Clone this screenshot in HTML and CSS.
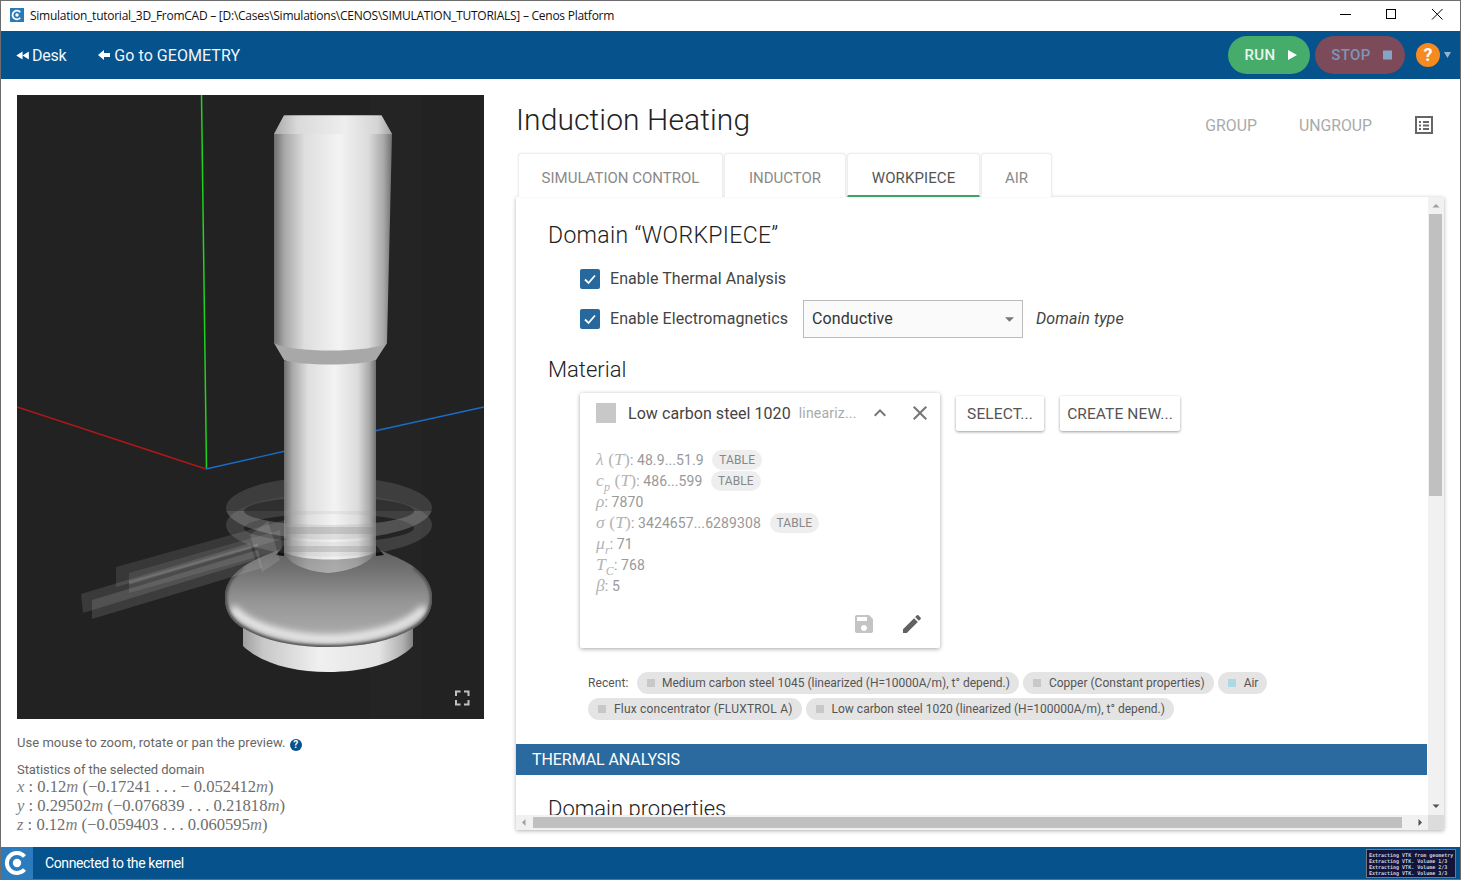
FILE: index.html
```html
<!DOCTYPE html>
<html lang="en">
<head>
<meta charset="utf-8">
<title>Cenos Platform</title>
<link rel="stylesheet" href="styles.css">
</head>
<body>
<div class="app">
  <header class="titlebar">
    <svg class="title-logo" viewBox="0 0 14 14"><rect width="14" height="14" fill="#2a7ab8"/><path d="M10.300 4.200A4.400 4.400 0 1 0 10.300 9.800" fill="none" stroke="#fff" stroke-width="1.800"/><circle cx="7" cy="7" r="1.700" fill="#fff"/></svg>
    <span class="title-text">Simulation_tutorial_3D_FromCAD – [D:\Cases\Simulations\CENOS\SIMULATION_TUTORIALS] – Cenos Platform</span>
    <div class="winctl">
      <svg viewBox="0 0 46 30"><path d="M18 14.500h11" stroke="#000" fill="none"/></svg>
      <svg viewBox="0 0 46 30"><rect x="18.500" y="9.500" width="9" height="9" stroke="#000" stroke-width="1" fill="none"/></svg>
      <svg viewBox="0 0 46 30"><path d="M18 9l10.500 10.500M28.500 9L18 19.500" stroke="#000" fill="none"/></svg>
    </div>
  </header>

  <nav class="navbar">
    <a class="navlink navlink-desk"><svg class="nav-ico" viewBox="0 0 15 10"><path d="M0 5l7-4.500v9zM7 5l7-4.500v9z" fill="#fff"/></svg>Desk</a>
    <a class="navlink navlink-geo"><svg class="nav-ico-s" viewBox="0 0 12 10"><path d="M0 5l6-5v3h6v4H6v3z" fill="#fff"/></svg>Go to GEOMETRY</a>
    <div class="nav-right">
      <button class="pill pill-run">RUN<svg class="pill-ico" viewBox="0 0 9 10"><path d="M0 0l9 5-9 5z" fill="#fff"/></svg></button>
      <button class="pill pill-stop">STOP<svg class="pill-ico" viewBox="0 0 9 10"><rect y=".5" width="9" height="9" fill="#86a5c6"/></svg></button>
      <span class="help">?</span>
      <svg class="help-caret" viewBox="0 0 7 6"><path d="M0 0h7L3.500 6z" fill="#8fb2d6"/></svg>
    </div>
  </nav>

  <main class="main">
    <section class="left">
      <div class="viewer">
        <svg class="scene" viewBox="17 95 467 624">
          <defs>
            <linearGradient id="cyl" x1="0" x2="1" y1="0" y2="0">
              <stop offset="0" stop-color="#6e6e6e"/><stop offset=".09" stop-color="#a8a8a8"/><stop offset=".26" stop-color="#dedede"/><stop offset=".55" stop-color="#f3f3f3"/><stop offset=".8" stop-color="#dcdcdc"/><stop offset=".93" stop-color="#a8a8a8"/><stop offset="1" stop-color="#707070"/>
            </linearGradient>
            <linearGradient id="cham" x1="0" x2="1" y1="0" y2="0">
              <stop offset="0" stop-color="#a8a8a8"/><stop offset=".2" stop-color="#dadada"/><stop offset=".6" stop-color="#eeeeee"/><stop offset=".88" stop-color="#d4d4d4"/><stop offset="1" stop-color="#a0a0a0"/>
            </linearGradient>
            <linearGradient id="domeV" gradientUnits="userSpaceOnUse" x1="0" x2="0" y1="548" y2="647">
              <stop offset="0" stop-color="#5e5e5e"/><stop offset=".25" stop-color="#747474"/><stop offset=".55" stop-color="#969696"/><stop offset=".8" stop-color="#a6a6a6"/><stop offset="1" stop-color="#b0b0b0"/>
            </linearGradient>
            <linearGradient id="foot" x1="0" x2="1" y1="0" y2="0">
              <stop offset="0" stop-color="#a0a0a0"/><stop offset=".12" stop-color="#c8c8c8"/><stop offset=".45" stop-color="#f0f0f0"/><stop offset=".8" stop-color="#e4e4e4"/><stop offset=".94" stop-color="#b0b0b0"/><stop offset="1" stop-color="#808080"/>
            </linearGradient>
            <clipPath id="frontClip"><rect x="200" y="511" width="260" height="80"/></clipPath>
            <clipPath id="domeClip"><path d="M284 548C275 552 255 558 243 567C230 576 225 586 225 598C225 610 230 620 243 628C265 641 295 647 328 647C362 647 392 641 414 628C427 620 432 610 432 598C432 586 426 576 414 567C402 558 382 552 376 548Z"/></clipPath>
            <filter id="blur5" x="-20%" y="-40%" width="140%" height="180%"><feGaussianBlur stdDeviation="3.500"/></filter>
            <filter id="blur2" x="-10%" y="-10%" width="120%" height="120%"><feGaussianBlur stdDeviation="1.800"/></filter>
          </defs>
          <rect x="17" y="95" width="467" height="624" fill="#222"/>
          <rect x="370" y="95" width="51" height="624" fill="#242424"/>
          <path d="M201.500 95L206.500 469" stroke="#1ed41e" stroke-width="1.500" fill="none"/>
          <path d="M17 407L206 469" stroke="#b01818" stroke-width="1.400" fill="none"/>
          <path d="M206 469L290 450M370 432L484 407" stroke="#1a6cc8" stroke-width="1.400" fill="none"/>

          <g fill="#aaa" fill-opacity=".2" fill-rule="evenodd">
            <path d="M226 508a103 31.500 0 1 0 206 0a103 31.500 0 1 0-206 0zM244 511a85 14 0 1 0 170 0a85 14 0 1 0-170 0z"/>
            <path transform="translate(0 17)" d="M226 508a103 31.500 0 1 0 206 0a103 31.500 0 1 0-206 0zM244 511a85 14 0 1 0 170 0a85 14 0 1 0-170 0z" fill-opacity=".1"/>
          </g>

          <path d="M243 628V646C262 664 295 672 328 672C362 672 396 664 413 646V628Z" fill="url(#foot)"/>
          <g clip-path="url(#domeClip)">
            <rect x="220" y="545" width="220" height="105" fill="url(#domeV)"/>
            <path d="M232 608C250 630 296 639 328 639C362 639 406 630 425 608" fill="none" stroke="#f2f2f2" stroke-width="8" filter="url(#blur5)"/>
            <path d="M243 567C230 576 225 586 225 598C225 610 230 620 243 628C265 641 295 647 328 647C362 647 392 641 414 628C427 620 432 610 432 598C432 586 426 576 414 567" fill="none" stroke="#4a4a4a" stroke-width="4" filter="url(#blur2)"/>
          </g>
          <path d="M274 343L284 360C300 368 360 368 376 360L387 343Z" fill="#a8a8a8"/>
          <path d="M284 552C286 560 300 571 328 573C356 571 372 560 376 552Z" fill="url(#cyl)" fill-opacity=".45"/>
          <path d="M284 360C300 366 360 366 376 360V552C360 562 300 562 284 552Z" fill="url(#cyl)"/>
          <path d="M274 134L284 115.500H381.500L392 134L387 343C370 353 291 353 274 343Z" fill="url(#cyl)"/>
          <path d="M274 134L284 115.500H381.500L392 134Z" fill="url(#cham)"/>
          <path d="M276 555L284 545V556ZM384 555L376 545V556Z" fill="#111"/>

          <g clip-path="url(#frontClip)" fill="#999" fill-opacity=".22" fill-rule="evenodd">
            <path d="M226 508a103 31.500 0 1 0 206 0a103 31.500 0 1 0-206 0zM244 511a85 14 0 1 0 170 0a85 14 0 1 0-170 0z"/>
            <path transform="translate(0 17)" d="M226 508a103 31.500 0 1 0 206 0a103 31.500 0 1 0-206 0zM244 511a85 14 0 1 0 170 0a85 14 0 1 0-170 0z" fill-opacity=".14"/>
          </g>
          <path d="M284 527H376V534H284ZM284 546H376V552H284Z" fill="#777" fill-opacity=".25"/>
          <path d="M116 567L285 520L286 538L116 587Z" fill="#fff" fill-opacity=".1"/>
          <path d="M129 573L280 530L282 550L129 593Z" fill="#fff" fill-opacity=".09"/>
          <path d="M81 594L250 543L255 560L83 613Z" fill="#fff" fill-opacity=".11"/>
          <path d="M92 600L258 550L262 568L92 619Z" fill="#fff" fill-opacity=".12"/>
          <path d="M129 583L258 545" stroke="#fff" stroke-opacity=".12" stroke-width="3" fill="none"/>
          <path d="M250 535L268 521L280 560L262 572Z" fill="#fff" fill-opacity=".12"/>
          <g fill="none" stroke="#c0c0c0" stroke-width="2">
            <path d="M456 696V691.500H460.500M464 691.500H468.500V696M468.500 700V704.500H464M460.500 704.500H456V700"/>
          </g>
        </svg>
      </div>
      <p class="hint">Use mouse to zoom, rotate or pan the preview. <span class="hint-q">?</span></p>
      <p class="stats-title">Statistics of the selected domain</p>
      <p class="math-line"><i>x</i> : 0.12<i>m</i> (−0.17241 . . . − 0.052412<i>m</i>)</p>
      <p class="math-line"><i>y</i> : 0.29502<i>m</i> (−0.076839 . . . 0.21818<i>m</i>)</p>
      <p class="math-line"><i>z</i> : 0.12<i>m</i> (−0.059403 . . . 0.060595<i>m</i>)</p>
    </section>

    <section class="right">
      <div class="page-head">
        <h1 class="page-title">Induction Heating</h1>
        <span class="head-btn head-group">GROUP</span>
        <span class="head-btn head-ungroup">UNGROUP</span>
        <svg class="head-list" viewBox="0 0 18 18"><rect x="1" y="1" width="16" height="16" fill="none" stroke="#666" stroke-width="2"/><path d="M4 5h2v2H4zM8 5h6v2H8zM4 8.500h2v2H4zM8 8.500h6v2H8zM4 12h2v2H4zM8 12h6v2H8z" fill="#666"/></svg>
      </div>
      <div class="tabs">
        <div class="tab tab-sim">SIMULATION CONTROL</div>
        <div class="tab tab-ind">INDUCTOR</div>
        <div class="tab tab-work active">WORKPIECE</div>
        <div class="tab tab-air">AIR</div>
      </div>
      <div class="panel">
        <div class="content">
          <h2 class="h-domain">Domain “WORKPIECE”</h2>
          <div class="check-row check-first">
            <span class="check"><svg viewBox="0 0 20 20"><path d="M5 10.500l3.500 3.500L15 6.500" fill="none" stroke="#fff" stroke-width="1.800"/></svg></span>
            <span class="lift">Enable Thermal Analysis</span>
          </div>
          <div class="check-row">
            <span class="check"><svg viewBox="0 0 20 20"><path d="M5 10.500l3.500 3.500L15 6.500" fill="none" stroke="#fff" stroke-width="1.800"/></svg></span>
            <span class="lift">Enable Electromagnetics</span>
            <div class="select"><span class="lift">Conductive</span><svg class="select-caret" viewBox="0 0 10 5"><path d="M0 0h10L5 5z" fill="#777"/></svg></div>
            <em class="domain-type lift">Domain type</em>
          </div>
          <h2 class="h-material">Material</h2>
          <div class="material-row">
            <div class="card">
              <div class="card-head">
                <span class="swatch"></span>
                <span class="card-name">Low carbon steel 1020</span>
                <span class="card-sub">lineariz...</span>
                <svg class="card-chev" viewBox="0 0 24 24"><path d="M12 8l-6 6 1.410 1.410L12 10.830l4.590 4.580L18 14z" fill="#757575"/></svg>
                <svg class="card-x" viewBox="0 0 24 24"><path d="M19 6.410L17.590 5 12 10.590 6.410 5 5 6.410 10.590 12 5 17.590 6.410 19 12 13.410 17.590 19 19 17.590 13.410 12z" fill="#757575"/></svg>
              </div>
              <div class="props">
                <div class="prop"><span class="sym"><i>λ</i> (<i>T</i>)</span>: 48.9...51.9 <span class="tag">TABLE</span></div>
                <div class="prop"><span class="sym"><i>c</i><sub><i>p</i></sub> (<i>T</i>)</span>: 486...599 <span class="tag">TABLE</span></div>
                <div class="prop"><span class="sym"><i>ρ</i></span>: 7870</div>
                <div class="prop"><span class="sym"><i>σ</i> (<i>T</i>)</span>: 3424657...6289308 <span class="tag">TABLE</span></div>
                <div class="prop"><span class="sym"><i>μ</i><sub><i>r</i></sub></span>: 71</div>
                <div class="prop"><span class="sym"><i>T</i><sub><i>C</i></sub></span>: 768</div>
                <div class="prop"><span class="sym"><i>β</i></span>: 5</div>
              </div>
              <div class="card-foot">
                <svg class="foot-save" viewBox="0 0 24 24"><path d="M17 3H5c-1.110 0-2 .9-2 2v14c0 1.100.89 2 2 2h14c1.100 0 2-.9 2-2V7l-4-4zm-5 16c-1.660 0-3-1.340-3-3s1.340-3 3-3 3 1.340 3 3-1.340 3-3 3zm3-10H5V5h10v4z" fill="#c4c4c4"/></svg>
                <svg class="foot-edit" viewBox="0 0 24 24"><path d="M3 17.250V21h3.750L17.810 9.940l-3.750-3.750L3 17.250zM20.710 7.040c.39-.39.39-1.020 0-1.410l-2.340-2.340c-.39-.39-1.020-.39-1.410 0l-1.830 1.830 3.750 3.750 1.830-1.830z" fill="#616161"/></svg>
              </div>
            </div>
            <button class="mat-btn">SELECT...</button>
            <button class="mat-btn mat-btn-new">CREATE NEW...</button>
          </div>
          <div class="recent">
            <span class="recent-label">Recent:</span>
            <span class="chip chip-first"><b class="dot"></b>Medium carbon steel 1045 (linearized (H=10000A/m), t° depend.)</span>
            <span class="chip"><b class="dot"></b>Copper (Constant properties)</span>
            <span class="chip"><b class="dot dot-air"></b>Air</span>
            <span class="chip chip-flux"><b class="dot"></b>Flux concentrator (FLUXTROL A)</span>
            <span class="chip"><b class="dot"></b>Low carbon steel 1020 (linearized (H=100000A/m), t° depend.)</span>
          </div>
          <div class="band">THERMAL ANALYSIS</div>
          <h2 class="h-props">Domain properties</h2>
        </div>
        <div class="vbar">
          <svg class="arrow" viewBox="0 0 16 17"><path d="M4.500 10.500h7L8 7z" fill="#a0a0a0"/></svg>
          <div class="vtrack"><div class="vthumb"></div></div>
          <svg class="arrow" viewBox="0 0 16 17"><path d="M4.500 6.500h7L8 10z" fill="#505050"/></svg>
        </div>
        <div class="hbar">
          <svg class="arrow-h" viewBox="0 0 17 15"><path d="M9.500 4v7L6 7.500z" fill="#a0a0a0"/></svg>
          <div class="hthumb"></div>
          <svg class="arrow-h" viewBox="0 0 17 15"><path d="M7.500 4v7L11 7.500z" fill="#505050"/></svg>
        </div>
        <div class="corner"></div>
      </div>
    </section>
  </main>

  <footer class="statusbar">
    <div class="status-logo"><svg viewBox="0 0 32 32"><path d="M23.500 9.500A10 10 0 1 0 23.500 22.500" fill="none" stroke="#fff" stroke-width="4"/><circle cx="16" cy="16" r="4.200" fill="#fff"/></svg></div>
    <span class="status-text">Connected to the kernel</span>
    <div class="terminal">Extracting VTK from geometry<br>Extracting VTK. Volume 1/3<br>Extracting VTK. Volume 2/3<br>Extracting VTK. Volume 3/3</div>
  </footer>
</div>
</body>
</html>
```

FILE: styles.css
```css
* { box-sizing: border-box; }
html, body { margin: 0; padding: 0; }
body { width: 1461px; height: 880px; overflow: hidden; font-family: Roboto, "Liberation Sans", sans-serif; background: #fff; }
.app { width: 1461px; height: 880px; border: 1px solid #6d6d6d; display: flex; flex-direction: column; background: #fff; }

.titlebar { height: 30px; flex: none; display: flex; align-items: center; padding: 0 0 2px 9px; background: #fff; }
.title-logo { width: 14px; height: 14px; margin-right: 6px; }
.title-text { font: 12px "Open Sans", "Noto Sans", sans-serif; letter-spacing: -.255px; color: #111; white-space: nowrap; }
.winctl { margin-left: auto; display: flex; }
.winctl svg { width: 46px; height: 30px; display: block; }

.navbar { height: 48px; flex: none; background: #05528c; display: flex; align-items: center; color: #fff; }
.navlink { display: flex; align-items: center; font-size: 16px; color: #f2f6fa; }
.navlink-desk { margin-left: 15px; letter-spacing: -.25px; }
.navlink-geo { margin-left: 32px; letter-spacing: .05px; }
.nav-ico { width: 14px; height: 9px; margin-right: 2px; }
.nav-ico-s { width: 12px; height: 10px; margin-right: 4px; }
.nav-right { margin-left: auto; display: flex; align-items: center; padding-right: 9px; }
.pill { height: 38px; border: 0; border-radius: 19px; display: flex; align-items: center; justify-content: center; font: 500 15px Roboto, sans-serif; letter-spacing: .4px; padding: 0 0 0 3px; }
.pill-run { width: 82px; background: #45ac6b; color: #e9f5ee; }
.pill-stop { width: 90px; margin-left: 5px; background: #7c4a58; color: #7f95b9; }
.pill-ico { width: 9px; height: 10px; margin-left: 12px; }
.help { width: 24px; height: 24px; margin-left: 11px; border-radius: 50%; background: #f58a1f; color: #fff; font: 700 18px/24px Roboto, sans-serif; text-align: center; }
.help-caret { width: 7px; height: 6px; margin-left: 4px; }

.main { flex: 1; display: flex; min-height: 0; }
.left { width: 515px; flex: none; padding: 16px 0 0 16px; }
.viewer { width: 467px; height: 624px; }
.scene { width: 467px; height: 624px; display: block; }
.hint { margin: 15px 0 0; font-size: 13px; line-height: 18px; color: #666; letter-spacing: .03px; }
.hint-q { display: inline-block; width: 12px; height: 12px; margin-left: 1px; border-radius: 50%; background: #05528c; color: #fff; font: 700 10px/12px Roboto, sans-serif; text-align: center; vertical-align: -1px; }
.stats-title { margin: 9px 0 0; font-size: 13px; line-height: 18px; color: #666; letter-spacing: -.07px; }
.math-line { margin: 0; font: 16.600px/19px "Liberation Serif", serif; color: #6e6e6e; white-space: nowrap; position: relative; top: -2px; }
.math-line i { color: #808080; }

.right { width: 928px; flex: none; padding-top: 16px; }
.page-head { height: 58px; display: flex; align-items: center; padding-bottom: 8px; }
.page-title { margin: 0; font: 300 30px/50px Roboto, sans-serif; letter-spacing: .1px; color: #222; }
.head-btn { font-size: 15.800px; color: #aaa; margin-top: 10px; }
.head-group { margin-left: auto; }
.head-ungroup { margin-left: 42px; }
.head-list { width: 18px; height: 18px; margin: 10px 11px 0 43px; }

.tabs { height: 44px; display: flex; padding-left: 2px; gap: 1px; }
.tab { height: 44px; padding-top: 4px; border: 1px solid #eee; border-bottom: 0; border-radius: 4px 4px 0 0; display: flex; align-items: center; justify-content: center; font-size: 15px; color: #8a8a8a; background: #fff; box-shadow: 0 0 2px rgba(0,0,0,.1); }
.tab-sim { width: 205px; }
.tab-ind { width: 122px; }
.tab-work { width: 133px; }
.tab-air { width: 71px; }
.tab.active { color: #555; border-bottom: 2px solid #3ba568; padding-top: 6px; letter-spacing: .1px; }

.panel { width: 928px; height: 633px; display: grid; grid-template-columns: 912px 16px; grid-template-rows: 618px 15px; background: #fff; box-shadow: 0 1px 4px rgba(0,0,0,.3); }
.content { overflow: hidden; padding-top: 24px; color: #333; }
.content h2 { height: 28px; margin: 0 0 0 32px; padding-top: 1px; font: 300 22px/28px Roboto, sans-serif; color: #222; }
.content .h-domain { font-size: 23px; letter-spacing: .33px; }
.check-row { height: 40px; display: flex; align-items: center; margin-left: 64px; font-size: 16px; letter-spacing: .08px; color: #444; }
.lift { padding-bottom: 2px; }
.check-first { margin-top: 10px; }
.check { width: 20px; height: 20px; border-radius: 2px; background: #27699c; margin-right: 10px; flex: none; }
.check svg { display: block; width: 20px; height: 20px; }
.select { width: 220px; height: 38px; margin-left: 15px; border: 1px solid #bbb; background: #fafafa; display: flex; align-items: center; justify-content: space-between; padding: 0 8px; color: #333; }
.select-caret { width: 9px; height: 5px; }
.domain-type { margin-left: 13px; color: #444; }
.content .h-material { margin-top: 16px; }
.material-row { margin: 10px 0 0 64px; display: flex; align-items: flex-start; }
.card { width: 360px; height: 255px; padding: 10px 8px 0 16px; border-radius: 2px; box-shadow: 0 1px 4px rgba(0,0,0,.35); flex: none; }
.card-head { height: 20px; display: flex; align-items: center; }
.swatch { width: 20px; height: 20px; background: #c8c8c8; flex: none; }
.card-name { margin-left: 12px; font-size: 16px; letter-spacing: .06px; color: #444; white-space: nowrap; }
.card-sub { margin-left: 8px; font-size: 14px; letter-spacing: .2px; color: #aaa; width: 69px; flex: none; white-space: nowrap; }
.card-chev { width: 24px; height: 24px; flex: none; }
.card-x { width: 24px; height: 24px; margin-left: 16px; flex: none; }
.props { margin-top: 26px; }
.prop { height: 21px; display: flex; align-items: center; font-size: 14px; letter-spacing: .1px; color: #999; white-space: pre; }
.sym { font: 17.500px/21px "Liberation Serif", serif; letter-spacing: .1px; color: #b4b4b4; }
.sym sub { font-size: 12px; line-height: 0; }
.tag { height: 20px; margin-left: 5px; padding: 0 7px; border-radius: 10px; background: #eee; font-size: 12px; line-height: 20px; letter-spacing: .1px; color: #888; }
.card-foot { margin-top: 16px; display: flex; justify-content: flex-end; padding-right: 8px; }
.foot-save { width: 24px; height: 24px; }
.foot-edit { width: 24px; height: 24px; margin-left: 24px; }
.mat-btn { height: 35px; margin: 3px 0 0 16px; border: 0; padding: 0; width: 88px; background: #fff; border-radius: 2px; box-shadow: 0 1px 3px rgba(0,0,0,.4); font: 15.500px Roboto, sans-serif; letter-spacing: .1px; color: #555; white-space: nowrap; }
.mat-btn-new { width: 120px; }
.recent { width: 700px; margin: 24px 0 0 72px; display: flex; flex-wrap: wrap; align-items: center; gap: 4px; font-size: 12px; color: #555; }
.recent-label { margin-right: 4px; letter-spacing: .08px; width: 41px; }
.chip { height: 22px; padding: 0 9px 0 10px; border-radius: 11px; background: #e4e4e4; display: flex; align-items: center; white-space: nowrap; }
.chip-flux { letter-spacing: .2px; }
.dot { width: 8px; height: 8px; margin-right: 8px; background: #c8c8c8; }
.chip-first .dot { margin-right: 7px; }
.dot-air { background: #add8e6; }
.band { height: 31px; margin: 24px 1px 0 0; padding-left: 16px; background: #2a6a9e; color: #fff; font-size: 16px; line-height: 31px; letter-spacing: -.07px; }
.content .h-props { margin-top: 19px; }

.vbar { background: #f1f1f1; display: flex; flex-direction: column; }
.arrow { width: 16px; height: 17px; flex: none; display: block; }
.vtrack { flex: 1; padding: 0 2px 0 1px; }
.vthumb { height: 282px; background: #c0c0c0; }
.hbar { background: #f1f1f1; display: flex; align-items: stretch; }
.arrow-h { width: 17px; height: 15px; flex: none; display: block; }
.hthumb { width: 869px; background: #c0c0c0; margin: 2px 0; }
.hbar .arrow-h:last-child { margin-left: 9px; }
.corner { background: #dcdcdc; }

.statusbar { height: 32px; flex: none; background: #05528c; display: flex; align-items: center; color: #fff; }
.status-logo { width: 32px; height: 32px; background: #2c7cbd; flex: none; }
.status-logo svg { display: block; width: 32px; height: 32px; }
.status-text { margin-left: 12px; font-size: 14px; letter-spacing: -.38px; }
.terminal { margin-left: auto; margin-right: 4px; width: 90px; height: 29px; padding: 2px 2px; background: #14143a; border: 1px solid #777; font: 700 5px/6px "DejaVu Sans Mono", monospace; color: #cfd0dc; white-space: nowrap; overflow: hidden; }
```
